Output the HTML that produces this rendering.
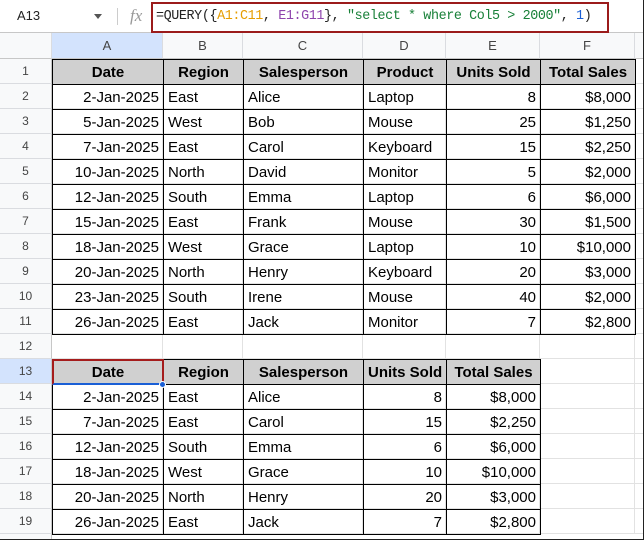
<!DOCTYPE html>
<html style="height:540px;overflow:hidden"><head><style>
body{margin:0;width:644px;height:540px;overflow:hidden;background:#fff;font-family:"Liberation Sans",Arial,sans-serif;position:relative}
.a{position:absolute;box-sizing:border-box}
.fb{left:0;top:0;width:644px;height:33px;background:#fff;border-bottom:1px solid #c7c7c7}
.ch{top:33px;height:26px;background:#f8f9fa;border-right:1px solid #dadce0;border-bottom:1px solid #c7c7c7;font-size:13px;color:#444;text-align:center;line-height:26px}
.rh{left:0;width:52px;height:25px;background:#f8f9fa;border-right:1px solid #c7c7c7;border-bottom:1px solid #dadce0;font-size:12px;color:#444;text-align:center;line-height:24px}
.c{height:26px;border:1px solid #000;font-size:15px;line-height:25px;padding:0 4px;white-space:nowrap;overflow:hidden;color:#000}
.h{background:#d0d0d0;font-weight:bold;text-align:center;font-size:15px}
.r{text-align:right}
.g{border-right:1px solid #e2e2e2;border-bottom:1px solid #e2e2e2;height:25px}
</style></head><body>
<div class="a fb"></div>
<div class="a" style="left:17px;top:8px;font-size:13px;color:#222">A13</div>
<div class="a" style="left:94px;top:14px;width:0;height:0;border-left:4px solid transparent;border-right:4px solid transparent;border-top:5px solid #555"></div>
<div class="a" style="left:117px;top:8px;width:1px;height:17px;background:#ccc"></div>
<div class="a" style="left:130px;top:6px;font-family:'Liberation Serif',serif;font-style:italic;font-size:17px;color:#999">fx</div>
<div class="a" style="left:151px;top:2px;width:458px;height:31px;border:2px solid #9b1b1b"></div>
<div class="a" style="left:156px;top:9px;font-family:'Liberation Mono',monospace;font-size:13.4px;color:#222;letter-spacing:-0.4px;white-space:nowrap">=QUERY({<span style="color:#e69d00">A1:C11</span>, <span style="color:#8e44ad">E1:G11</span>}, <span style="color:#188038">"select * where Col5 &gt; 2000"</span>, <span style="color:#1a5fd6">1</span>)</div>
<div id="grid"></div>
<div class="a" style="left:0;top:0;width:644px;height:540px;border:1px solid #222;border-top:none;border-left:none;pointer-events:none"></div>
<script>
var cols=[52,163,243,363,446,540,635,644],L="ABCDEFG",h='',Y0=59;
h+='<div class="a ch" style="left:0;width:52px"></div>';
for(var i=0;i<7;i++){h+='<div class="a ch" style="left:'+cols[i]+'px;width:'+(cols[i+1]-cols[i])+'px;'+(i==0?'background:#d3e3fd;':'')+'">'+(i<6?L[i]:'')+'</div>';}
for(var r=0;r<19;r++){var y=Y0+r*25;h+='<div class="a rh" style="top:'+y+'px;'+(r==12?'background:#d3e3fd;':'')+'">'+(r+1)+'</div>';
for(var i=0;i<7;i++)h+='<div class="a g" style="left:'+cols[i]+'px;top:'+y+'px;width:'+(cols[i+1]-cols[i])+'px"></div>';}
h+='<div class="a" style="left:0;top:534px;width:52px;height:6px;background:#f8f9fa;border-right:1px solid #c7c7c7"></div>';
var t1=[["Date","Region","Salesperson","Product","Units Sold","Total Sales"],
["2-Jan-2025","East","Alice","Laptop","8","$8,000"],["5-Jan-2025","West","Bob","Mouse","25","$1,250"],["7-Jan-2025","East","Carol","Keyboard","15","$2,250"],["10-Jan-2025","North","David","Monitor","5","$2,000"],["12-Jan-2025","South","Emma","Laptop","6","$6,000"],["15-Jan-2025","East","Frank","Mouse","30","$1,500"],["18-Jan-2025","West","Grace","Laptop","10","$10,000"],["20-Jan-2025","North","Henry","Keyboard","20","$3,000"],["23-Jan-2025","South","Irene","Mouse","40","$2,000"],["26-Jan-2025","East","Jack","Monitor","7","$2,800"]];
var t2=[["Date","Region","Salesperson","Units Sold","Total Sales"],["2-Jan-2025","East","Alice","8","$8,000"],["7-Jan-2025","East","Carol","15","$2,250"],["12-Jan-2025","South","Emma","6","$6,000"],["18-Jan-2025","West","Grace","10","$10,000"],["20-Jan-2025","North","Henry","20","$3,000"],["26-Jan-2025","East","Jack","7","$2,800"]];
var c2=[52,163,243,363,446,540];
function tbl(t,cs,y0,ralign){for(var r=0;r<t.length;r++)for(var i=0;i<t[r].length;i++){var cl='a c'+(r==0?' h':(ralign.indexOf(i)>=0?' r':''));
h+='<div class="'+cl+'" style="left:'+cs[i]+'px;top:'+(y0+r*25)+'px;width:'+(cs[i+1]-cs[i]+1)+'px">'+t[r][i]+'</div>';}}
tbl(t1,cols,Y0,[0,4,5]);tbl(t2,c2,Y0+300,[0,3,4]);
h+='<div class="a" style="left:52px;top:'+(Y0+300)+'px;width:112px;height:26px;border:2px solid #a51c1c;border-bottom-color:#1a5fd6"></div>';
h+='<div class="a" style="left:159px;top:'+(Y0+322)+'px;width:7px;height:7px;border-radius:50%;background:#1a5fd6;border:1px solid #fff"></div>';
document.getElementById('grid').innerHTML=h;
</script>
</body></html>
